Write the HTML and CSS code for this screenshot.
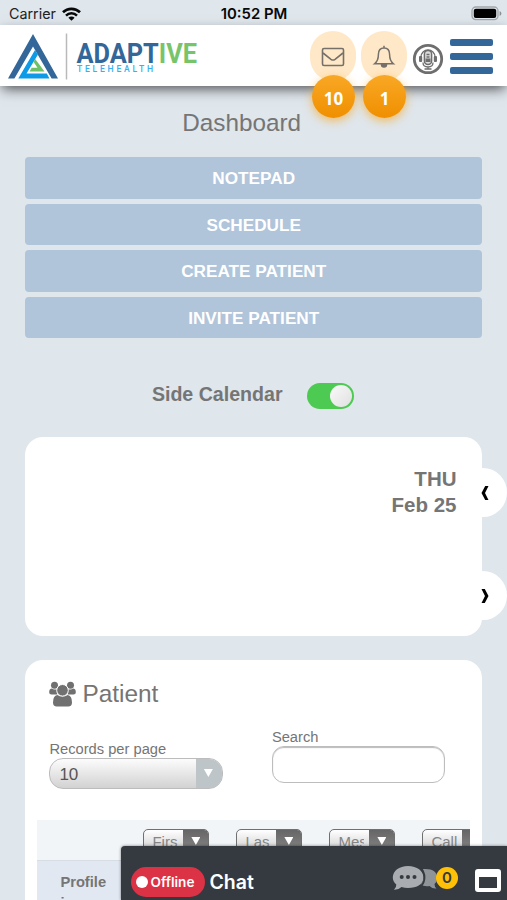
FILE: index.html
```html
<!DOCTYPE html>
<html lang="en">
<head>
    <meta charset="UTF-8">
    <meta name="viewport" content="width=device-width, initial-scale=1">
    <title>Dashboard</title>
    <link rel="stylesheet" href="styles.css">
</head>
<body>

    <div class="status">
        <div class="status__carrier">Carrier
            <svg class="status__wifi" width="19" height="14" viewBox="0 0 19 14">
                <path d="M1 5.3a12.1 12.1 0 0 1 17 0" fill="none" stroke="#080808" stroke-width="2.7"/>
                <path d="M4 8.6a7.8 7.8 0 0 1 11 0" fill="none" stroke="#080808" stroke-width="2.5"/>
                <path d="M6.4 10.7a4.4 4.4 0 0 1 6.2 0L9.5 13.7z" fill="#080808"/>
            </svg>
        </div>
        <div class="status__time">10:52 PM</div>
        <svg class="status__battery" width="31" height="15" viewBox="0 0 31 15">
            <rect x="1" y="1" width="26" height="12.6" rx="3.8" fill="#dfe6ed" stroke="#a2a6aa" stroke-width="1.3"/>
            <rect x="2.8" y="2.7" width="22.4" height="9.2" rx="2" fill="#000"/>
            <path d="M28.6 5v5q1.8-.9 1.8-2.5T28.6 5z" fill="#8c9094"/>
        </svg>
    </div>

    <header class="header">
        <svg class="logo" width="192" height="54" viewBox="0 0 192 54">
            <path d="M25 6L50 50.5H43.6L25 18.5L6.4 50.5H0z" fill="#336699"/>
            <path d="M27 22L10.3 50.5H41.5L38.8 45.5H18.5L30 26.5z" fill="#0d9be8"/>
            <path d="M27.2 31L36.5 43.5H21.5L23.7 39.8H29.5L25.6 34z" fill="#6fc167"/>
            <path d="M58.5 5.5V51.5" stroke="#b9b9b9" stroke-width="1.5"/>
            <text class="logo__name" x="68.5" y="35.2" textLength="120.5" lengthAdjust="spacingAndGlyphs">ADAPT<tspan class="logo__name--green">IVE</tspan></text>
            <text class="logo__sub" x="69" y="44" textLength="76">TELEHEALTH</text>
        </svg>

        <nav class="header__nav">
            <div class="notice">
                <svg width="24" height="24" viewBox="0 0 24 24" fill="none" stroke="#75706a" stroke-width="1.6">
                    <rect x="1.5" y="4.5" width="21" height="17" rx="1.5"/>
                    <path d="M2 9l8 6.3q2 1.400 4 0l8-6.3"/>
                </svg>
                <span class="notice__count">10</span>
            </div>
            <div class="notice">
                <svg width="24" height="24" viewBox="0 0 24 24" fill="none" stroke="#75706a" stroke-width="1.5">
                    <path d="M12 1.700v2M2.600 19.800q3.800-3.100 3.800-9.300Q6.400 4.100 12 4.100t5.600 6.400q0 6.200 3.800 9.300z"/>
                    <path d="M9.500 20.500a2.500 2.500 0 0 0 5 0z" fill="#75706a"/>
                </svg>
                <span class="notice__count">1</span>
            </div>
            <svg class="mic" width="32" height="32" viewBox="0 0 32 32" fill="none" stroke="#6e6e6e">
                <circle cx="16" cy="16" r="13.7" stroke-width="2.8"/>
                <path d="M9 16v-2a7 7 0 0 1 14 0v2" stroke-width="1.3"/>
                <rect x="7" y="13" width="3.2" height="6" rx="1" fill="#6e6e6e" stroke="none"/>
                <rect x="21.8" y="13" width="3.2" height="6" rx="1" fill="#6e6e6e" stroke="none"/>
                <rect x="12.4" y="7.5" width="7.2" height="14" rx="3.5" fill="#ddd" stroke-width="1.5"/>
                <path d="M14.5 11.5h3M14.5 14h3" stroke-width="1.3"/>
                <rect x="13.5" y="15.5" width="5" height="3.5" fill="#6e6e6e" stroke="none"/>
                <path d="M11 19.5q0 4.500 5 4.500t5-4.500M16 23.500v3M12.500 26h7" stroke-width="1.3"/>
            </svg>
            <div class="menu"><span></span><span></span><span></span></div>
        </nav>
    </header>

    <main class="page">
        <h1 class="page__title">Dashboard</h1>

        <div class="actions">
            <button>NOTEPAD</button>
            <button>SCHEDULE</button>
            <button>CREATE PATIENT</button>
            <button>INVITE PATIENT</button>
        </div>

        <div class="toggle">
            <span>Side Calendar</span>
            <div class="switch"></div>
        </div>

        <section class="calendar">
            <div>THU</div>
            <div>Feb 25</div>
            <div class="calendar__arrow calendar__arrow--prev">
                <svg width="8" height="14" viewBox="0 0 8 14"><path d="M4.200 0H7.500L4 7L7.500 14H4.200L.5 7z"/></svg>
            </div>
            <div class="calendar__arrow calendar__arrow--next">
                <svg width="8" height="14" viewBox="0 0 8 14"><path d="M3.800 0H.5L4 7L.5 14H3.800L7.500 7z"/></svg>
            </div>
        </section>

        <section class="patient">
            <h2 class="patient__title">
                <svg width="27" height="26" viewBox="0 0 27 26" fill="#707070">
                    <circle cx="5.5" cy="4.2" r="3.5"/>
                    <circle cx="21.5" cy="4.2" r="3.5"/>
                    <path d="M2.500 7.500q3 1.700 5.300.4l.5 5.600H2.500Q.2 13.500.2 11.500 0 8 2.500 7.500zM24.500 7.500q-3 1.700-5.300.4l-.5 5.600h5.800q2.300 0 2.300-2 .2-3.500-2.300-4z"/>
                    <circle cx="13.5" cy="9.3" r="5.8" stroke="#fff"/>
                    <path d="M8.300 14q5.200 3.500 10.400 0 4.300.5 4.300 7.500 0 4-3.800 4H7.800q-3.800 0-3.800-4 0-7 4.300-7.500z"/>
                </svg>
                Patient
            </h2>

            <div class="filters">
                <div class="field field--records">
                    <label>Records per page</label>
                    <div class="select">
                        <span>10</span>
                        <div class="select__arrow"></div>
                    </div>
                </div>
                <div class="field">
                    <label>Search</label>
                    <input class="search" type="text">
                </div>
            </div>

            <div class="table">
                <div class="table__head">
                    <div class="sort"><span>Firs</span><i></i></div>
                    <div class="sort"><span>Las</span><i></i></div>
                    <div class="sort"><span>Mes</span><i></i></div>
                    <div class="sort"><span>Call</span><i></i></div>
                </div>
                <div class="table__row">Profile<br>i</div>
            </div>
        </section>
    </main>

    <div class="chat">
        <div class="chat__status">Offline</div>
        <div class="chat__title">Chat</div>
        <svg class="chat__bubbles" width="46" height="26" viewBox="0 0 46 26">
            <path d="M31 4q14-1 14 9 0 4-2.500 6 0 3 2 4.500-4 .5-7-2.500-5 1-9-1.500 6-5 2.500-15.500z" fill="#8f9499"/>
            <path d="M16 1C25 1 31.500 6 31.500 12.500S25 23 16 23q-3.500 0-6.500-1-3 3-7.500 2.800 2.500-2.500 2.300-5.300Q.8 16.500.8 12.500C.8 6 7 1 16 1z" fill="#a9acb0"/>
            <path d="M28.500 3.500Q32.500 7 32.500 12.500T28.500 21.500" fill="none" stroke="#343a40" stroke-width="1.8"/>
            <circle cx="9.7" cy="12" r="2" fill="#343a40"/>
            <circle cx="16" cy="12" r="2" fill="#343a40"/>
            <circle cx="22.5" cy="12" r="2" fill="#343a40"/>
        </svg>
        <div class="chat__count">0</div>
        <div class="chat__window"></div>
    </div>

</body>
</html>
```

FILE: styles.css
```css
html {
  box-sizing: border-box;
}

*,
*::before,
*::after {
  box-sizing: inherit;
}

body {
  position: relative;
  margin: 0;
  height: 900px;
  overflow: hidden;
  background-color: #dfe6ec;
  color: #757575;
  font-family: "Liberation Sans", Helvetica, Arial, sans-serif;
}

h1,
h2 {
  margin: 0;
  font-weight: normal;
}

button,
input {
  border: 0;
  outline: none;
  font-family: inherit;
}

svg {
  display: block;
  flex: none;
}

/* Status bar */

.status {
  display: grid;
  grid-template-columns: 1fr auto 1fr;
  align-items: center;
  height: 25px;
  padding: 2px 5px 0 9px;
  color: #222;
  font-family: Inter, sans-serif;
  font-size: 14.3px;
}

.status__carrier {
  display: flex;
  align-items: center;
  gap: 6px;
}

.status__time {
  color: #080808;
  font-size: 14.9px;
  font-weight: 600;
  padding-right: 3px;
}

.status__battery {
  justify-self: end;
}

/* Header */

.header {
  display: flex;
  justify-content: space-between;
  position: relative;
  height: 61px;
  padding: 0 14px 0 8px;
  background-color: #fff;
  box-shadow: 0 5px 12px -2px rgba(0, 0, 0, 0.65);
}

.logo {
  margin-top: 3px;
}

.logo__name {
  fill: #336699;
  font-family: Roboto, sans-serif;
  font-size: 27px;
  font-weight: 700;
}

.logo__name--green {
  fill: #78c46b;
}

.logo__sub {
  fill: #38b0f0;
  font-family: Roboto, sans-serif;
  font-size: 8.6px;
  font-weight: 500;
}

.header__nav {
  display: flex;
  align-items: flex-start;
}

.notice {
  display: flex;
  justify-content: center;
  position: relative;
  width: 46px;
  height: 50px;
  margin: 6px 5px 0 0;
  padding-top: 13px;
  border-radius: 23px;
  background-color: #ffe8c7;
}

.notice__count {
  position: absolute;
  top: 44px;
  left: 2px;
  width: 43px;
  height: 43px;
  border-radius: 50%;
  background-image: linear-gradient(#f9a825, #f08f00);
  box-shadow: 0 3px 10px rgba(250, 165, 25, 0.65);
  color: #fff;
  font-family: "Open Sans", sans-serif;
  font-size: 17px;
  font-weight: 700;
  line-height: 47px;
  text-align: center;
}

.mic {
  margin: 18px 6px 0 0;
}

.menu {
  display: flex;
  flex-direction: column;
  gap: 7px;
  margin-top: 14px;
}

.menu span {
  width: 43px;
  height: 7px;
  border-radius: 2px;
  background-color: #336699;
}

/* Page */

.page {
  padding: 20px 25px 0 25.4px;
}

.page__title {
  padding-right: 24px;
  font-size: 24.3px;
  line-height: 33px;
  text-align: center;
}

.actions {
  display: grid;
  grid-auto-rows: 41.5px;
  gap: 5px;
  margin-top: 18px;
}

.actions button {
  padding: 2px 0 0;
  border-radius: 4px;
  background-color: #b0c4da;
  color: #fff;
  font-size: 17.2px;
  font-weight: bold;
}

.toggle {
  display: flex;
  align-items: center;
  gap: 24px;
  margin-top: 45px;
  padding-left: 126.5px;
  height: 26px;
  font-size: 19.6px;
  font-weight: bold;
}

.toggle span {
  margin-top: -4px;
}

.switch {
  display: flex;
  justify-content: flex-end;
  width: 47px;
  height: 26px;
  padding: 2px;
  border-radius: 13px;
  background-color: #4cca52;
}

.switch::before {
  content: "";
  width: 22px;
  height: 22px;
  border-radius: 50%;
  background-image: linear-gradient(135deg, #fafafa, #e0e0e0);
}

.calendar {
  position: relative;
  height: 199px;
  margin-top: 28px;
  padding: 29px 25.5px 0;
  border-radius: 18px;
  background-color: #fff;
  font-size: 20.5px;
  font-weight: bold;
  line-height: 26px;
  text-align: right;
}

.calendar__arrow {
  display: flex;
  align-items: center;
  justify-content: center;
  position: absolute;
  right: -25px;
  width: 48px;
  height: 49px;
  padding-left: 3px;
  border-radius: 50%;
  background-color: #fff;
}

.calendar__arrow--prev {
  top: 31px;
}

.calendar__arrow--next {
  top: 134px;
}

/* Patient */

.patient {
  height: 240px;
  margin-top: 24px;
  padding: 20px 12px 0;
  overflow: hidden;
  border-radius: 18px 18px 0 0;
  background-color: #fff;
}

.patient__title {
  display: flex;
  align-items: center;
  gap: 6px;
  padding-left: 12px;
  font-size: 24.4px;
  line-height: 28px;
}

.filters {
  display: flex;
  gap: 49px;
  margin: 21px 0 0 12px;
  font-size: 14.7px;
}

.field {
  width: 173.5px;
}

.field--records {
  padding-top: 12px;
}

.field label {
  display: block;
  line-height: 17px;
}

.select {
  display: flex;
  justify-content: space-between;
  height: 31px;
  overflow: hidden;
  border: 1px solid #bcbcbc;
  border-radius: 14px;
  background-image: linear-gradient(#fcfcfc, #d2d2d2);
  color: #555;
  font-size: 17px;
  line-height: 31px;
  padding-left: 9px;
}

.select__arrow {
  width: 26px;
  padding: 10px 0 0 8px;
  background-color: #bdc5c9;
}

.select__arrow::before,
.sort i::before {
  content: "";
  display: block;
  width: 9px;
  height: 8px;
  background-color: #fff;
  clip-path: polygon(0 0, 100% 0, 50% 100%);
}

.search {
  display: block;
  width: 173.5px;
  height: 37px;
  border: 1px solid #bdbdbd;
  border-radius: 12px;
  background-color: #fff;
  box-shadow: inset 0 1px 1px #bbb;
}

.table {
  margin-top: 31px;
  overflow: hidden;
}

.table__head {
  display: flex;
  gap: 27px;
  height: 41px;
  padding: 9px 0 0 106px;
  border-bottom: 1px solid #d6dde3;
  background-color: #f2f5f8;
}

.sort {
  display: flex;
  flex: none;
  justify-content: space-between;
  width: 66px;
  height: 26px;
  overflow: hidden;
  border: 1px solid #707070;
  border-radius: 5px;
  background-image: linear-gradient(#fff, #c8c8c8);
  color: #858585;
  font-size: 15px;
  line-height: 23px;
}

.sort span {
  width: 26px;
  margin-left: 8px;
  overflow: hidden;
}

.sort i {
  width: 25px;
  padding: 7px 0 0 8px;
  background-image: linear-gradient(#666, #8a8a8a);
}

.table__row {
  height: 60px;
  padding: 11px 0 0 23px;
  background-color: #e2e8f2;
  font-size: 14.7px;
  font-weight: bold;
  line-height: 21px;
}

/* Chat bar */

.chat {
  display: flex;
  align-items: center;
  position: absolute;
  right: 0;
  bottom: 0;
  width: 386.5px;
  height: 54px;
  padding: 17px 6px 0 10px;
  border-radius: 4px 0 0 0;
  background-color: #343a40;
  box-shadow: 0 0 3px rgba(0, 0, 0, 0.5);
  color: #fff;
  font-family: Inter, sans-serif;
  font-weight: 600;
}

.chat__status {
  display: flex;
  align-items: center;
  gap: 3px;
  width: 74px;
  height: 30px;
  padding-left: 5px;
  border-radius: 15px;
  background-color: #dc3246;
  font-size: 13.6px;
}

.chat__status::before {
  content: "";
  width: 12px;
  height: 12px;
  border-radius: 50%;
  background-color: #fff;
}

.chat__title {
  margin-left: 5px;
  font-size: 19.5px;
}

.chat__bubbles {
  margin: -8px 0 0 auto;
}

.chat__count {
  width: 22px;
  height: 22px;
  margin: -7px 0 0 -2px;
  border-radius: 50%;
  background-color: #ffc107;
  color: #343a40;
  font-size: 15px;
  line-height: 22px;
  text-align: center;
}

.chat__window {
  width: 26px;
  height: 23px;
  margin: -3px 0 0 17px;
  border: 4px solid #fff;
  border-top-width: 8px;
  border-radius: 3px;
}
```
